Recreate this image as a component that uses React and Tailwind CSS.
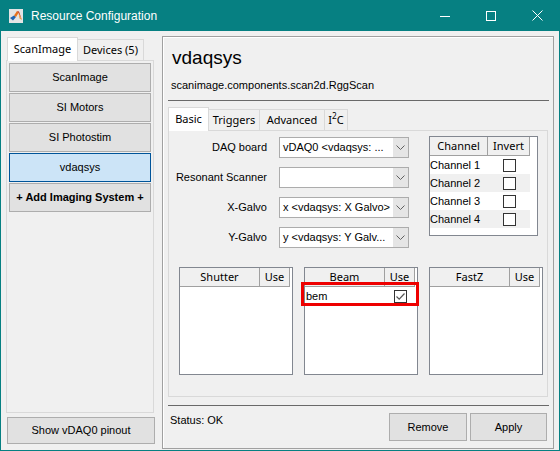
import React from "react"

const arial = "font-['Liberation_Sans',Arial,sans-serif]"
const seg = "font-['Noto_Sans','Open_Sans',sans-serif]"

const MatlabIcon = () => (
  <svg width="14" height="14" viewBox="0 0 14 14">
    <rect x="0" y="0" width="14" height="14" fill="#e4e4e4" />
    <polygon points="1,9 5,6.5 7,8 4,11.5" fill="#1e64b4" />
    <polygon points="5,6.5 8,2 9.5,4 7,8" fill="#e8721c" />
    <polygon points="8,2 10,2.5 13,11 9.5,4" fill="#c8361c" />
    <polygon points="9.5,4 13,11 10.5,9.5" fill="#f09a3a" />
  </svg>
)

const Chevron = () => (
  <svg width="9" height="5" viewBox="0 0 9 5">
    <path d="M0.5 0.5 L4.5 4.5 L8.5 0.5" fill="none" stroke="#606060" strokeWidth="1" />
  </svg>
)

const Check = ({ checked }) => (
  <div className="w-[13px] h-[13px] border border-[#333333] bg-white flex items-center justify-center">
    {checked && (
      <svg width="11" height="11" viewBox="0 0 11 11">
        <path d="M1.5 5.5 L4.2 8.2 L9.5 2.5" fill="none" stroke="#555555" strokeWidth="1.2" />
      </svg>
    )}
  </div>
)

const Dropdown = ({ label, value }) => (
  <div className="flex items-center h-[21px]">
    <div className={`w-[98px] text-right text-[11px] ${arial}`}>{label}</div>
    <div className="ml-[12px] w-[130px] h-[21px] border border-[#acacac] bg-white flex items-center">
      <span className={`flex-1 pl-[3px] text-[11px] whitespace-nowrap overflow-hidden ${arial}`}>{value}</span>
      <div className="w-[15px] h-full bg-[#e5e5e5] flex items-center justify-center">
        <Chevron />
      </div>
    </div>
  </div>
)

const DeviceTable = ({ name, rows = [], highlight }) => (
  <div className="relative w-[114px] h-[108px] border border-[#828790] bg-white">
    <div className={`flex h-[19px] text-[11px] ${seg}`}>
      <div className="w-[80px] border-r border-b border-[#a0a0a0] bg-[#f0f0f0] flex items-center justify-center">{name}</div>
      <div className="w-[30px] border-r border-b border-[#a0a0a0] bg-[#f0f0f0] flex items-center justify-center">Use</div>
    </div>
    {rows.map((r) => (
      <div key={r} className="flex h-[18px] items-center">
        <div className={`w-[80px] pl-[1px] text-[11px] ${arial}`}>{r}</div>
        <div className="w-[30px] flex justify-center">
          <Check checked />
        </div>
      </div>
    ))}
    {highlight && (
      <div className="absolute left-[-4px] top-[14px] w-[118px] h-[24px] border-[3px] border-[#ee0000]" />
    )}
  </div>
)

const SideButton = ({ children, selected, bold }) => (
  <div
    className={`h-[29px] flex items-center justify-center text-[11px] ${arial} ${
      selected ? "bg-[#cce4f7] border border-[#005499]" : "bg-[#e1e1e1] border border-[#adadad]"
    } ${bold ? "font-bold" : ""}`}
  >
    {children}
  </div>
)

export default function App() {
  const channels = ["Channel 1", "Channel 2", "Channel 3", "Channel 4"]

  return (
    <div className="w-[560px] h-[451px] bg-[#068082] flex flex-col overflow-hidden text-black">
      {/* title bar */}
      <div className="h-[31px] flex items-center text-white shrink-0">
        <div className="ml-[9px]">
          <MatlabIcon />
        </div>
        <span className={`ml-[8px] text-[12px] ${arial}`}>Resource Configuration</span>
        <div className="ml-auto flex h-full">
          <div className="w-[46px] h-full flex items-center justify-center">
            <svg width="10" height="10" viewBox="0 0 10 10">
              <path d="M0 5.5 H10" stroke="#fff" strokeWidth="1" />
            </svg>
          </div>
          <div className="w-[46px] h-full flex items-center justify-center">
            <svg width="10" height="10" viewBox="0 0 10 10">
              <rect x="0.5" y="0.5" width="9" height="9" fill="none" stroke="#fff" strokeWidth="1" />
            </svg>
          </div>
          <div className="w-[46px] h-full flex items-center justify-center">
            <svg width="11" height="11" viewBox="0 0 11 11">
              <path d="M0.5 0.5 L10.5 10.5 M10.5 0.5 L0.5 10.5" stroke="#fff" strokeWidth="1" />
            </svg>
          </div>
        </div>
      </div>

      {/* body */}
      <div className="flex-1 mx-px mb-px bg-[#f0f0f0] flex">
        {/* left column */}
        <div className="ml-[5px] mt-[6px] w-[149px] flex flex-col">
          <div className={`flex items-end h-[23px] text-[11px] ${seg}`}>
            <div className="relative z-10 -mb-px ml-px w-[71px] h-[24px] bg-white border border-b-0 border-[#d9d9d9] flex items-center justify-center">
              ScanImage
            </div>
            <div className="w-[66px] h-[21px] bg-[#f0f0f0] border border-l-0 border-b-0 border-[#d9d9d9] flex items-center justify-center">
              Devices (5)
            </div>
          </div>
          <div className="w-[148px] h-[353px] border border-[#d9d9d9] bg-[#f0f0f0] px-[2px] pt-[2px] flex flex-col gap-[1px]">
            <SideButton>ScanImage</SideButton>
            <SideButton>SI Motors</SideButton>
            <SideButton>SI Photostim</SideButton>
            <SideButton selected>vdaqsys</SideButton>
            <SideButton bold>+ Add Imaging System +</SideButton>
          </div>
          <div className="mt-[4px] ml-px w-[148px]">
            <div className={`h-[27px] bg-[#e1e1e1] border border-[#adadad] flex items-center justify-center text-[11px] ${arial}`}>
              Show vDAQ0 pinout
            </div>
          </div>
        </div>

        {/* main panel */}
        <div className="mt-[5px] ml-[7px] w-[392px] h-[413px] border border-[#a0a0a0] shadow-[inset_1px_1px_0_#ffffff] pl-[5px] pr-[4px] flex flex-col">
          <div className={`pl-[4px] pt-[10px] text-[19px] leading-[22px] ${arial}`}>vdaqsys</div>
          <div className={`pl-[3px] mt-[9px] text-[11px] leading-[14px] ${arial}`}>scanimage.components.scan2d.RggScan</div>
          <div className="mt-[8px] h-px bg-[#696969]" />

          {/* tabs */}
          <div className={`mt-[6px] flex items-end h-[23px] text-[11px] ${seg}`}>
            <div className="relative z-10 -mb-px w-[41px] h-[24px] bg-white border border-b-0 border-[#d9d9d9] flex items-center justify-center">
              Basic
            </div>
            <div className="w-[51px] h-[21px] bg-[#f0f0f0] border border-l-0 border-b-0 border-[#d9d9d9] flex items-center justify-center">
              Triggers
            </div>
            <div className="w-[65px] h-[21px] bg-[#f0f0f0] border border-l-0 border-b-0 border-[#d9d9d9] flex items-center justify-center">
              Advanced
            </div>
            <div className="w-[23px] h-[21px] bg-[#f0f0f0] border border-l-0 border-b-0 border-[#d9d9d9] flex items-center justify-center">
              I<sup>2</sup>C
            </div>
          </div>

          <div className="w-[380px] h-[267px] border border-[#d9d9d9] bg-[#f0f0f0] flex flex-col">
            <div className="h-[106px] pt-[5px] flex">
              <div className="pt-[1px] flex flex-col gap-[9px]">
                <Dropdown label="DAQ board" value="vDAQ0 <vdaqsys: ..." />
                <Dropdown label="Resonant Scanner" value="" />
                <Dropdown label="X-Galvo" value="x <vdaqsys: X Galvo>" />
                <Dropdown label="Y-Galvo" value="y <vdaqsys: Y Galv..." />
              </div>
              <div className="ml-[20px] w-[109px] h-[100px] border border-[#828790] bg-white">
                <div className={`flex h-[19px] text-[11px] ${seg}`}>
                  <div className="w-[58px] border-r border-b border-[#a0a0a0] bg-[#f0f0f0] flex items-center justify-center">Channel</div>
                  <div className="w-[42px] border-r border-b border-[#a0a0a0] bg-[#f0f0f0] flex items-center justify-center">Invert</div>
                </div>
                {channels.map((c, i) => (
                  <div key={c} className={`flex w-[100px] h-[18px] items-center ${i % 2 ? "bg-[#f0f0f0]" : "bg-white"}`}>
                    <div className={`w-[58px] text-[11px] ${arial}`}>{c}</div>
                    <div className="w-[42px] flex justify-center">
                      <Check />
                    </div>
                  </div>
                ))}
              </div>
            </div>
            <div className="mt-[30px] pl-[10px] flex gap-[11px]">
              <DeviceTable name="Shutter" />
              <DeviceTable name="Beam" rows={["bem"]} highlight />
              <DeviceTable name="FastZ" />
            </div>
          </div>

          <div className="mt-[8px] h-px bg-[#696969]" />
          <div className="mt-[7px] pr-[2px] flex">
            <div className={`pl-[2px] text-[11px] leading-[14px] ${arial}`}>Status: OK</div>
            <div className="ml-auto flex gap-[3px]">
              <div className={`w-[78px] h-[28px] bg-[#e1e1e1] border border-[#adadad] flex items-center justify-center text-[11px] ${arial}`}>
                Remove
              </div>
              <div className={`w-[77px] h-[28px] bg-[#e1e1e1] border border-[#adadad] flex items-center justify-center text-[11px] ${arial}`}>
                Apply
              </div>
            </div>
          </div>
        </div>
      </div>
    </div>
  )
}
